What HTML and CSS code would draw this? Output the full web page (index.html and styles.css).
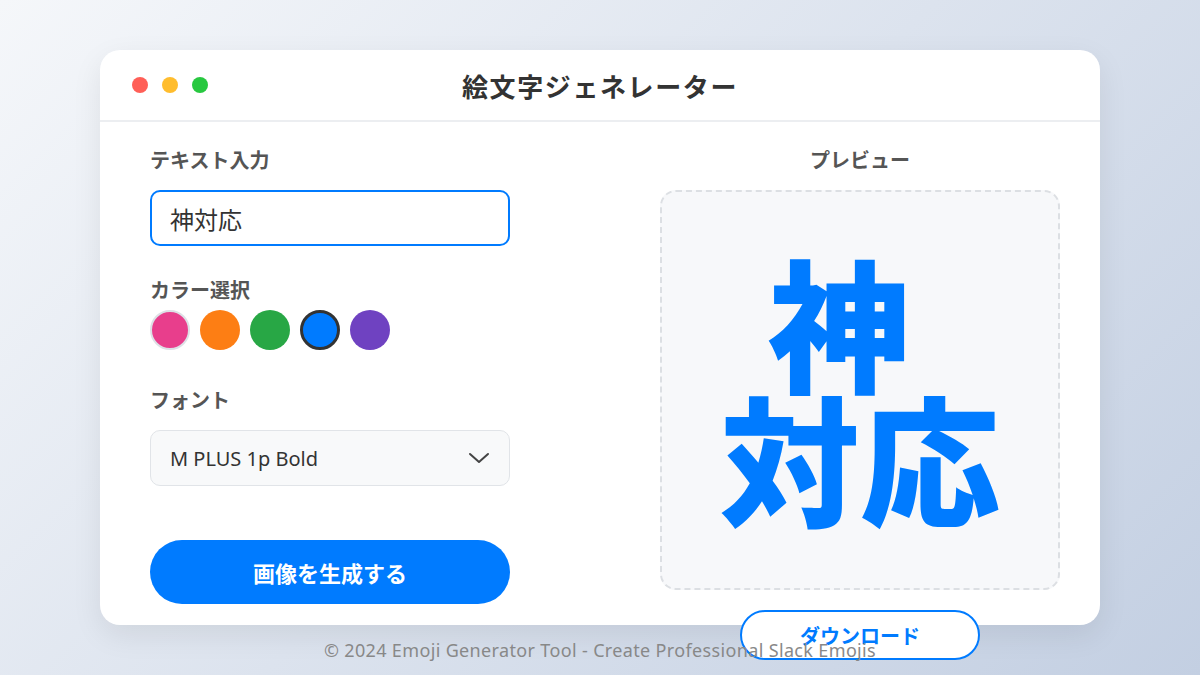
FILE: index.html
```html
<!DOCTYPE html>
<html lang="ja">
<head>
<meta charset="utf-8">
<title>絵文字ジェネレーター</title>
<link rel="stylesheet" href="styles.css">
</head>
<body>
<div class="card">
  <div class="titlebar">
    <div class="lights">
      <span class="light red"></span>
      <span class="light yellow"></span>
      <span class="light green"></span>
    </div>
    <h1 class="title">絵文字ジェネレーター</h1>
  </div>
  <div class="main">
    <div class="left">
      <div class="label">テキスト入力</div>
      <div class="input">神対応</div>
      <div class="label label-color">カラー選択</div>
      <div class="swatches">
        <span class="swatch pink"></span>
        <span class="swatch orange"></span>
        <span class="swatch green2"></span>
        <span class="swatch blue selected"></span>
        <span class="swatch purple"></span>
      </div>
      <div class="label label-font">フォント</div>
      <div class="select">
        <span>M PLUS 1p Bold</span>
        <svg class="chev" width="22" height="14" viewBox="0 0 22 14"><path d="M2 3 L11 11 L20 3" fill="none" stroke="#444" stroke-width="2" stroke-linecap="round" stroke-linejoin="round"/></svg>
      </div>
      <button class="generate">画像を生成する</button>
    </div>
    <div class="right">
      <div class="label center">プレビュー</div>
      <div class="preview">
        <div class="emoji"><span class="line1">神</span><span class="line2">対応</span></div>
      </div>
      <div class="dl-row"><button class="download">ダウンロード</button></div>
    </div>
  </div>
</div>
<div class="footer">© 2024 Emoji Generator Tool - Create Professional Slack Emojis</div>
</body>
</html>
```
FILE: styles.css
```css
html, body {
  margin: 0;
  padding: 0;
}
body {
  width: 1200px;
  height: 675px;
  overflow: hidden;
  background: linear-gradient(135deg, #f5f7fa 0%, #c3cfe2 100%);
  font-family: "Noto Sans", "Noto Sans CJK JP", sans-serif;
  box-sizing: border-box;
  padding: 50px 100px 0;
}
.card {
  height: 575px;
  background: #fff;
  border-radius: 20px;
  box-shadow: 0 10px 30px rgba(0, 0, 0, 0.08);
}
.titlebar {
  height: 70px;
  border-bottom: 2px solid #eceef1;
  display: flex;
  align-items: center;
  position: relative;
  justify-content: center;
}
.lights {
  position: absolute;
  left: 32px;
  top: 27px;
  display: flex;
  gap: 14px;
}
.light {
  width: 16px;
  height: 16px;
  border-radius: 50%;
  display: block;
}
.red { background: #ff5f57; }
.yellow { background: #ffbd2e; }
.green { background: #28c840; }
.title {
  margin: 0;
  font-family: "Noto Sans CJK JP", sans-serif;
  font-size: 26px;
  font-weight: 700;
  color: #333;
  letter-spacing: 1.6px;
}
.main {
  display: flex;
  justify-content: space-between;
  padding: 24px 40px 0 50px;
}
.left {
  width: 360px;
  display: flex;
  flex-direction: column;
}
.right {
  width: 400px;
  display: flex;
  flex-direction: column;
}
.label {
  font-family: "Noto Sans CJK JP", sans-serif;
  font-size: 20px;
  font-weight: 700;
  color: #555;
  line-height: 28px;
  margin-bottom: 16px;
}
.center { text-align: center; }
.input {
  height: 56px;
  box-sizing: border-box;
  border: 2px solid #007bff;
  border-radius: 10px;
  padding: 0 18px;
  display: flex;
  align-items: center;
  font-family: "Noto Sans CJK JP", sans-serif;
  font-size: 24px;
  color: #333;
}
.label-color {
  margin-top: 30px;
  margin-bottom: 6px;
}
.swatches {
  display: flex;
  gap: 10px;
}
.swatch {
  width: 40px;
  height: 40px;
  border-radius: 50%;
  box-sizing: border-box;
  display: block;
}
.pink { background: #e83e8c; border: 2px solid #dde0e6; }
.orange { background: #fd7e14; }
.green2 { background: #28a745; }
.blue { background: #007bff; }
.purple { background: #6f42c1; }
.selected { border: 3px solid #333; }
.label-font {
  margin-top: 36px;
}
.select {
  height: 56px;
  box-sizing: border-box;
  background: #f8f9fa;
  border: 1px solid #e1e4e8;
  border-radius: 10px;
  padding: 0 19px;
  display: flex;
  align-items: center;
  justify-content: space-between;
  font-size: 20px;
  color: #333;
}
.generate {
  margin-top: 54px;
  height: 64px;
  border: none;
  border-radius: 32px;
  background: #007bff;
  color: #fff;
  font-family: "Noto Sans CJK JP", sans-serif;
  font-size: 22px;
  font-weight: 700;
  padding: 0;
}
.preview {
  height: 400px;
  box-sizing: border-box;
  border: 2px dashed #dcdfe3;
  border-radius: 16px;
  background: #f7f8fa;
  display: flex;
  align-items: center;
  justify-content: center;
}
.emoji {
  font-family: "Noto Sans CJK JP", sans-serif;
  font-weight: 900;
  color: #007bff;
  text-align: center;
}
.line1 {
  display: block;
  font-size: 143px;
  line-height: 130px;
  padding-right: 42px;
}
.line2 {
  display: block;
  font-size: 140px;
  line-height: 140px;
}
.dl-row {
  display: flex;
  justify-content: center;
  margin-top: 20px;
}
.download {
  width: 240px;
  height: 50px;
  background: #fff;
  border: 2px solid #007bff;
  border-radius: 25px;
  color: #007bff;
  font-family: "Noto Sans CJK JP", sans-serif;
  font-size: 20px;
  font-weight: 700;
  padding: 0;
}
.footer {
  margin-top: 13px;
  text-align: center;
  font-size: 18px;
  line-height: 24px;
  color: #888;
  letter-spacing: 0.35px;
}
```
